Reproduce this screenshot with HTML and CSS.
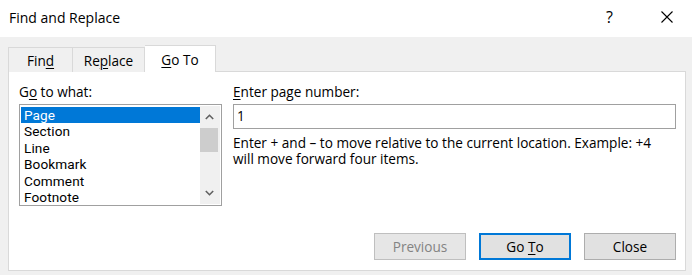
FILE: index.html
```html
<!DOCTYPE html>
<html>
<head>
<meta charset="utf-8">
<link rel="stylesheet" href="styles.css">
</head>
<body>
<div class="dialog">
  <div class="titlebar">
    <span class="title">Find and Replace</span>
    <span class="help">?</span>
    <span class="close">
      <svg width="12" height="12" viewBox="0 0 12 12"><path d="M0.5 0.5 L11.5 11.5 M11.5 0.5 L0.5 11.5" stroke="#000" stroke-width="1.1" fill="none"/></svg>
    </span>
  </div>
  <div class="body">
    <div class="tabs">
      <div class="tab"><span>Fin<u>d</u></span></div>
      <div class="tab"><span>Re<u>p</u>lace</span></div>
      <div class="tab active"><span><u>G</u>o To</span></div>
    </div>
    <div class="panel">
      <div class="row">
        <div class="left">
          <div class="label">G<u>o</u> to what:</div>
          <div class="listbox">
            <div class="items">
              <div class="item selected">Page</div>
              <div class="item">Section</div>
              <div class="item">Line</div>
              <div class="item">Bookmark</div>
              <div class="item">Comment</div>
              <div class="item">Footnote</div>
            </div>
            <div class="scrollbar">
              <div class="arrow up"><svg width="9" height="6" viewBox="0 0 9 6"><path d="M0.8 5 L4.5 1.3 L8.2 5" stroke="#606060" stroke-width="1.6" fill="none"/></svg></div>
              <div class="thumb"></div>
              <div class="track"></div>
              <div class="arrow down"><svg width="9" height="6" viewBox="0 0 9 6"><path d="M0.8 1 L4.5 4.7 L8.2 1" stroke="#606060" stroke-width="1.6" fill="none"/></svg></div>
            </div>
          </div>
        </div>
        <div class="right">
          <div class="label"><u>E</u>nter page number:</div>
          <div class="input">1</div>
          <div class="hint">Enter + and – to move relative to the current location. Example: +4 will move forward four items.</div>
        </div>
      </div>
      <div class="buttons">
        <div class="btn disabled"><span>Previous</span></div>
        <div class="btn default"><span>Go <u>T</u>o</span></div>
        <div class="btn"><span>Close</span></div>
      </div>
    </div>
  </div>
</div>
</body>
</html>
```
FILE: styles.css
```css
html, body {
  margin: 0;
  padding: 0;
}
body {
  width: 692px;
  height: 275px;
  background: #f0f0f0;
  font-family: "Open Sans", "Noto Sans", sans-serif;
  color: #000;
  overflow: hidden;
}
.titlebar {
  height: 37px;
  background: #fff;
  display: flex;
  align-items: center;
}
.title {
  margin-left: 9px;
  font-size: 14px;
  margin-top: -3px;
}
.help {
  margin-left: auto;
  font-size: 16px;
  line-height: 16px;
  margin-top: -3px;
  width: 12px;
}
.close {
  margin-left: 43px;
  margin-right: 19px;
  display: flex;
  margin-top: -3px;
}
.body {
  padding: 8px 7px 0 8px;
}
.tabs {
  display: flex;
  height: 27px;
  align-items: flex-end;
  margin-bottom: -1px;
  position: relative;
  z-index: 1;
}
.tab {
  height: 25px;
  box-sizing: border-box;
  border: 1px solid #d9d9d9;
  border-bottom: none;
  border-left: none;
  background: #f0f0f0;
  font-size: 13.6px;
  display: flex;
  align-items: center;
  justify-content: center;
  padding-top: 1px;
}
.tab:first-child {
  border-left: 1px solid #d9d9d9;
  width: 65px;
}
.tab:nth-child(2) {
  width: 72px;
}
.tab.active {
  width: 71px;
  height: 27px;
  background: #fff;
  border-left: none;
  padding-top: 0;
  padding-bottom: 0;
}
.panel {
  background: #fff;
  border: 1px solid #d9d9d9;
  height: 200px;
  box-sizing: border-box;
  width: 678px;
  padding: 11px 9px 0 10px;
  display: flex;
  flex-direction: column;
}
.row {
  display: flex;
  gap: 11px;
}
.label {
  font-size: 13.6px;
  height: 21px;
  line-height: 18px;
}
.left {
  width: 205px;
}
.listbox {
  border: 1px solid #a0a0a0;
  height: 102px;
  box-sizing: border-box;
  display: flex;
}
.items {
  flex: 1;
  padding: 2px 0 0 1px;
  overflow: hidden;
}
.item {
  font-family: Roboto, "Open Sans", sans-serif;
  font-size: 13.6px;
  height: 16.4px;
  line-height: 16.4px;
  padding-left: 3px;
  letter-spacing: 0.1px;
}
.item.selected {
  background: #0078d7;
  color: #fff;
}
.scrollbar {
  width: 20px;
  background: #f0f0f0;
  display: flex;
  flex-direction: column;
  margin: 1px 1px 1px 0;
}
.arrow {
  height: 22px;
  display: flex;
  align-items: center;
  justify-content: center;
  padding-right: 2px;
}
.thumb {
  height: 24px;
  background: #cdcdcd;
  margin-right: 2px;
}
.track {
  flex: 1;
}
.right {
  flex: 1;
}
.input {
  height: 25px;
  box-sizing: border-box;
  border: 1px solid #a0a0a0;
  font-size: 13.6px;
  padding-left: 3px;
  line-height: 22px;
  width: 443px;
}
.hint {
  font-size: 13.6px;
  line-height: 16px;
  margin-top: 6px;
  width: 440px;
}
.buttons {
  display: flex;
  justify-content: flex-end;
  gap: 13px;
  margin-top: auto;
  margin-bottom: 10px;
}
.btn {
  width: 92px;
  height: 27px;
  box-sizing: border-box;
  background: #e1e1e1;
  border: 1px solid #adadad;
  font-size: 13.6px;
  display: flex;
  align-items: center;
  justify-content: center;
}
.btn.disabled {
  color: #838383;
  border-color: #bfbfbf;
  background: #e6e6e6;
}
.btn.default {
  border: 2px solid #0078d7;
}
u {
  text-decoration-thickness: 1px;
  text-underline-offset: 2px;
}
```
